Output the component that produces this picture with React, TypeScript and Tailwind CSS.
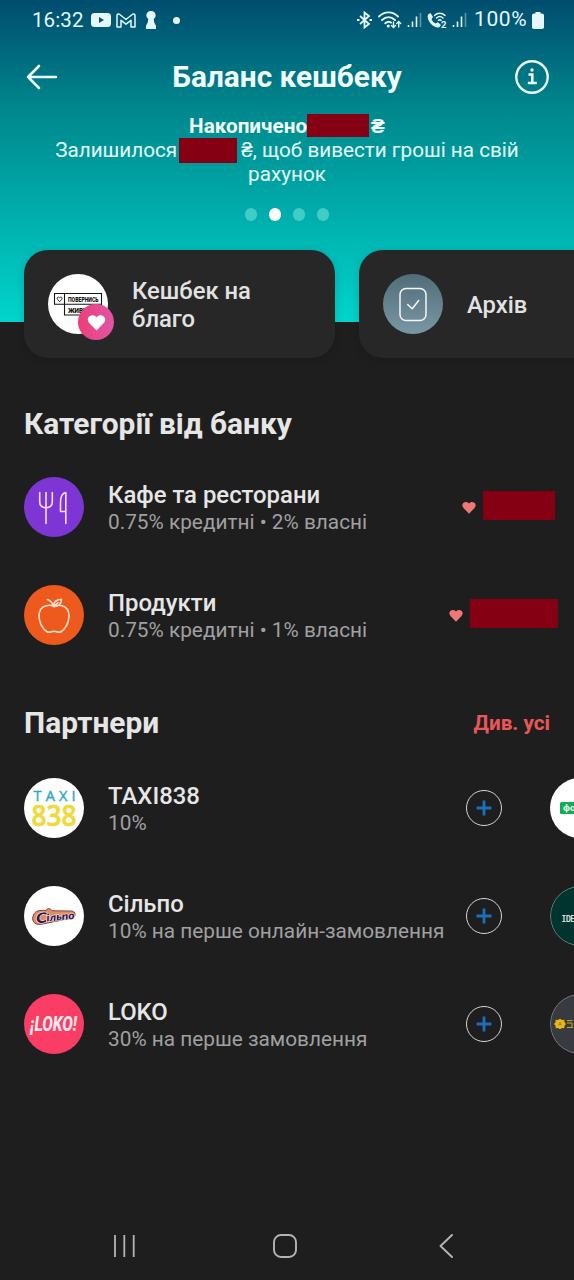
import type { ReactNode } from "react";

const CATEGORIES = [
  {
    title: "Кафе та ресторани",
    rate: "0.75% кредитні • 2% власні",
    color: "bg-[#7d35d3]",
    icon: <CutleryIcon />,
    amount: "mr-[19px] w-[72px]",
  },
  {
    title: "Продукти",
    rate: "0.75% кредитні • 1% власні",
    color: "bg-[#ee5a1e]",
    icon: <AppleIcon />,
    amount: "mr-4 w-[88px]",
  },
];

const PARTNERS = [
  { title: "TAXI838", rate: "10%", logo: <TaxiLogo />, next: <ForaLogo /> },
  { title: "Сільпо", rate: "10% на перше онлайн-замовлення", logo: <SilpoLogo />, next: <IdealistLogo /> },
  { title: "LOKO", rate: "30% на перше замовлення", logo: <LokoLogo />, next: <HiveLogo /> },
];

const HEART = "M8 14.6 1.6 8C-.4 5.8.1 2.9 2.2 1.7 4.2.5 6.8.9 8 3 9.2.9 11.8.5 13.8 1.7 15.9 2.9 16.4 5.8 14.4 8Z";

function CutleryIcon() {
  return (
    <svg viewBox="0 0 60 60" className="size-full" fill="none" stroke="#f8dcf0" strokeWidth="1.6" strokeLinecap="round" strokeLinejoin="round">
      <path d="M15.700 15.500v9.500c0 3.500 2.500 5.500 6.300 6 3.800-.5 6.300-2.500 6.300-6v-9.500M22 15.500v31M41.800 46.500v-31c-3.500.7-5.300 4.500-5.300 10v9h5.300" />
    </svg>
  );
}

function AppleIcon() {
  return (
    <svg viewBox="0 0 60 60" className="size-full" fill="none" stroke="#ffe2cc" strokeWidth="1.600" strokeLinecap="round" strokeLinejoin="round">
      <path d="M30 21.500c-2-1.300-5.200-1.600-8-.8-4.500 1.300-7 5-7 10.300 0 6.500 3.700 13.300 8 15.800 2.500 1.400 4.600-.6 7-.6s4.500 2 7 .6c4.300-2.500 8-9.300 8-15.800 0-5.300-2.500-9-7-10.300-2.800-.8-6-.5-8 .8Z" />
      <path d="M23.500 14.500c3 1.300 5.200 3.500 6.500 7M30 21.500c-1-4 2-7.200 7.500-7.300-.2 4.500-2.500 7.300-7.500 7.300Zm0 0 4-4" />
    </svg>
  );
}

function TaxiLogo() {
  return (
    <svg viewBox="0 0 60 60" className="size-full rounded-full bg-white font-['Open_Sans',sans-serif]">
      <text x="9.500" y="22.500" fontSize="14.500" fill="#29a8c7" stroke="#29a8c7" strokeWidth=".4" textLength="42" lengthAdjust="spacing">TAXI</text>
      <text x="7.500" y="47.500" fontSize="29" fontWeight="600" fill="#f2d83a" stroke="#f2d83a" strokeWidth=".7" textLength="45" lengthAdjust="spacingAndGlyphs">838</text>
    </svg>
  );
}

function SilpoLogo() {
  return (
    <svg viewBox="0 0 60 60" className="size-full rounded-full bg-white font-['Lato',sans-serif]">
      <path d="M9.500 29c1.500-4 5-5 12.500-4.500.8-2.500 5-2.500 6 .3l19 .2c5.500.2 5.500 6.300 0 7.300L17 38.300c-7 1-10-4-7.500-9.300Z" fill="#dd8f62" stroke="#8d4140" strokeWidth="1" />
      <g transform="rotate(-5 30 32)" fontWeight="900" fontStyle="italic" fill="#311351" stroke="#f7e3df" strokeWidth="1.200" paintOrder="stroke">
        <text x="12" y="35.700" fontSize="14" textLength="11" lengthAdjust="spacingAndGlyphs">С</text>
        <text x="22.500" y="34.800" fontSize="10.500" textLength="28" lengthAdjust="spacingAndGlyphs">ільпо</text>
      </g>
    </svg>
  );
}

function LokoLogo() {
  return (
    <svg viewBox="0 0 60 60" className="size-full rounded-full bg-[#fa3d64] font-['Roboto',sans-serif]">
      <text x="6" y="37" fontSize="19.500" fontWeight="800" fontStyle="italic" fill="#ffe9ee" textLength="47" lengthAdjust="spacingAndGlyphs">¡LOKO!</text>
    </svg>
  );
}

function ForaLogo() {
  return (
    <svg viewBox="0 0 60 60" className="size-full rounded-full bg-white font-['Inter',sans-serif]">
      <rect x="10" y="24" width="40" height="12" rx="1.500" fill="#11ac54" />
      <text x="13" y="32.700" fontSize="9" fontWeight="700" fill="#e8fff0">фора</text>
    </svg>
  );
}

function IdealistLogo() {
  return (
    <svg viewBox="0 0 60 60" className="size-full rounded-full bg-[#01342f] font-['DejaVu_Sans_Mono',monospace]">
      <circle cx="30" cy="30" r="29.500" fill="none" stroke="#7d9592" strokeWidth=".8" />
      <text x="11.500" y="35.500" fontSize="8" fill="#e5edec" stroke="#e5edec" strokeWidth=".2" letterSpacing="-.4">IDEALIST</text>
    </svg>
  );
}

function HiveLogo() {
  return (
    <svg viewBox="0 0 60 60" className="size-full rounded-full bg-[#373a41]">
      <circle cx="30" cy="30" r="29.500" fill="none" stroke="#85878b" strokeWidth=".8" />
      <path d="m10 24.800 2 1.200 2.300-.2.200 2.400 1.500 1.800-1.500 1.800-.2 2.400-2.300-.2-2 1.200-2-1.200-2.300.2-.2-2.400L4 30l1.500-1.800.2-2.400 2.300.2Z" fill="#e8b70c" />
      <path d="M10 28v2m0 0 1.700 1.200M10 30l-1.700 1.200" stroke="#7a6315" strokeWidth=".9" />
      <path d="M17 26.600h5.500M17 29h5v4.500M17 33.500h5.500M24.500 26.600v7M24.500 26.600h6M24.500 30h5M24.500 33.500h6" fill="none" stroke="#d3a914" strokeWidth="1" />
    </svg>
  );
}

function CharityLogo() {
  return (
    <svg viewBox="0 0 60 60" className="size-full rounded-full bg-white font-['Roboto',sans-serif]">
      <path d="M6.500 19.500h47v10.800h-47Zm10 0V41h37V30.300" fill="none" stroke="#151515" strokeWidth="1.100" />
      <path d="M11.600 27.700 9.300 25.200c-.8-1.500 1-3 2.300-1.400 1.300-1.600 3.100-.1 2.300 1.400Z" fill="none" stroke="#151515" strokeWidth=".9" />
      <text x="20" y="28" fontSize="7.500" fontWeight="900" fill="#111" textLength="30.500" lengthAdjust="spacingAndGlyphs">ПОВЕРНИСЬ</text>
      <text x="20" y="38.500" fontSize="7.500" fontWeight="900" fill="#111" textLength="25" lengthAdjust="spacingAndGlyphs">ЖИВИМ</text>
    </svg>
  );
}

function Signal() {
  return (
    <svg viewBox="0 0 15 16" className="h-4 w-[15px]" stroke="#e2f4fa" strokeWidth="1.600">
      <path d="M1.500 15v-2M5.500 15v-5.500M9.500 15V4.500" />
      <path d="M13.500 15V1" opacity=".4" />
    </svg>
  );
}

function StatusBar() {
  return (
    <div className="flex h-10 items-center justify-between pl-8 pr-[30px] text-[#e6f7fb]">
      <div className="flex items-center">
        <span className="w-[59px] text-[20.500px] tracking-[0.100px]">16:32</span>
        <svg viewBox="0 0 20 14" className="h-[14px] w-5">
          <rect width="20" height="14" rx="3.500" fill="currentColor" />
          <path d="m8 4 5 3-5 3Z" fill="#07506f" />
        </svg>
        <svg viewBox="0 0 20 15" className="ml-[5px] h-[15px] w-5" fill="none" stroke="currentColor" strokeWidth="1.500" strokeLinejoin="round">
          <path d="M1 14V2.500C1 .7 2.800.5 3.800 1.500L10 6.500l6.200-5C17.200.5 19 .7 19 2.500V14h-4V7.300L10 11.200 5 7.300V14Z" />
        </svg>
        <svg viewBox="0 0 12 18" className="ml-[9px] h-[18px] w-3" fill="currentColor">
          <path d="M6 0C8.800 0 10.700 2 10.700 4.500c0 1.500-.9 2.600-1.900 3.300.1 3.200.8 5.200 2.200 6.700V18H1v-3.500c1.400-1.500 2.100-3.500 2.200-6.700-1-.7-1.900-1.800-1.900-3.300C1.300 2 3.200 0 6 0Z" />
        </svg>
        <span className="ml-4 size-[7px] rounded-full bg-current" />
      </div>
      <div className="flex items-center">
        <svg viewBox="0 0 15 18" className="h-[18px] w-[15px]" fill="none" stroke="currentColor" strokeWidth="1.800">
          <path d="m3 5 9 8-4.500 3.500v-15L12 5l-9 8M0 9h2.500M12.500 9H15" />
        </svg>
        <svg viewBox="0 0 26 18" className="ml-[6px] h-[18px] w-[26px]" fill="none" stroke="currentColor" strokeWidth="1.900" strokeLinecap="round">
          <path d="M1 5.500C6.500 0 14.500 0 20 5.500M4 9c4-3.600 9-3.600 13 0M7.300 12.300c2-1.700 4.200-1.700 5.700-.7" />
          <circle cx="10.300" cy="15" r=".6" fill="currentColor" />
          <path d="M15.500 11v5M13.500 14.500l2 2 2-2M20.700 16v-5M18.700 12.500l2-2 2 2" strokeWidth="1.400" />
        </svg>
        <div className="ml-[3px]"><Signal /></div>
        <svg viewBox="0 0 22 18" className="ml-[5px] h-[18px] w-[22px]">
          <path d="M1 3.500 3.500 2 6 6 4.500 8c.8 2.200 2.100 3.500 4.300 4.500l2-1.200 3.200 2.600-2 2.600C6.500 17.500-1 9.500 1 3.500Z" fill="currentColor" />
          <path d="M7.500 4.500c3-3 7.500-3 10.500 0M9.500 7c2-1.800 4.500-1.800 6.500 0M11.500 9.300c.8-.6 1.800-.6 2.600 0" fill="none" stroke="currentColor" strokeWidth="1.500" strokeLinecap="round" />
          <text x="14" y="16.500" fontSize="9.500" fontWeight="700" fill="currentColor">2</text>
        </svg>
        <div className="ml-[3px]"><Signal /></div>
        <span className="ml-[7px] w-[57px] text-[21px] tracking-[0.600px]">100%</span>
        <svg viewBox="0 0 12 17" className="ml-px h-[17px] w-3" fill="currentColor">
          <path d="M3.500 0h5v1.500H10c1.200 0 2 .8 2 2V15c0 1.200-.8 2-2 2H2c-1.200 0-2-.8-2-2V3.500c0-1.200.8-2 2-2h1.500Z" />
        </svg>
      </div>
    </div>
  );
}

function Header() {
  return (
    <header className="h-[322px] bg-linear-to-b from-[#004d6e] via-[#00888d] via-[34%] to-[#00d5cc] text-white">
      <StatusBar />
      <div className="flex h-[74px] items-center justify-between px-6">
        <svg viewBox="0 0 36 36" className="size-9" fill="none" stroke="#effcfd" strokeWidth="2.600" strokeLinecap="round" strokeLinejoin="round">
          <path d="M32 18H4M15 7 4 18l11 11" />
        </svg>
        <h1 className="text-[29.800px] font-bold text-[#f1fdff]">Баланс кешбеку</h1>
        <svg viewBox="0 0 36 36" className="size-9" fill="none" stroke="#effcfd" strokeWidth="2.400">
          <circle cx="18" cy="18" r="15.700" />
          <path d="M14.500 15.500h3.800v8.500M13.800 24h9" strokeWidth="2.500" />
          <circle cx="18" cy="11" r="1.700" fill="#effcfd" stroke="none" />
        </svg>
      </div>
      <div className="flex flex-col items-center text-[20.700px] leading-6 text-[#e5fbf9]">
        <p className="flex h-6 items-center font-bold text-[#f1fffd]">
          Накопичено
          <span className="mb-px mr-0.5 h-[23px] w-[62px] bg-[#860014]" />₴
        </p>
        <p className="flex h-6 items-center whitespace-pre">
          Залишилося
          <span className="ml-0.5 mr-1 h-[25px] w-[58px] bg-[#860014]" />₴, щоб вивести гроші на свій
        </p>
        <p>рахунок</p>
      </div>
      <div className="mt-[22px] flex justify-center gap-3">
        <span className="h-[13px] w-3 rounded-full bg-[#41ccc6]" />
        <span className="h-[13px] w-3 rounded-full bg-white" />
        <span className="h-[13px] w-3 rounded-full bg-[#41ccc6]" />
        <span className="h-[13px] w-3 rounded-full bg-[#41ccc6]" />
      </div>
    </header>
  );
}

function ActionCard({ icon, children }: { icon: ReactNode; children: ReactNode }) {
  return (
    <div className="flex h-[108px] w-[311px] shrink-0 items-center gap-6 rounded-3xl bg-[#272727] pl-6 shadow-[0_2px_10px_rgba(0,0,0,0.15)]">
      {icon}
      <span className="mt-0.5 w-[140px] text-[23.800px] font-medium leading-7 text-[#e2e2e2]">{children}</span>
    </div>
  );
}

function Row({ icon, title, rate, children }: { icon: ReactNode; title: string; rate: string; children: ReactNode }) {
  return (
    <li className="flex h-[108px] items-center">
      <div className="ml-6 size-[60px] shrink-0">{icon}</div>
      <div className="ml-6 mt-0.5 w-[338px] shrink-0 whitespace-nowrap">
        <p className="text-[23.900px] font-medium leading-7 text-[#e6e6e6]">{title}</p>
        <p className="text-[20.800px] leading-[26px] text-[#a0a0a0]">{rate}</p>
      </div>
      {children}
    </li>
  );
}

export default function App() {
  return (
    <div className="flex h-[1280px] w-[574px] flex-col overflow-hidden bg-[#1e1e1e] font-['Roboto',sans-serif]">
      <Header />

      <div className="-mt-[72px] flex gap-6 pl-6">
        <ActionCard
          icon={
            <div className="relative size-[60px] shrink-0">
              <CharityLogo />
              <span className="absolute left-[30px] top-[30px] flex size-9 items-center justify-center rounded-full bg-linear-to-r from-[#ed3c79] to-[#df55a5]">
                <svg viewBox="0 0 16 15" className="h-[17px] w-[19px]" fill="#fff">
                  <path d={HEART} />
                </svg>
              </span>
            </div>
          }
        >
          Кешбек на благо
        </ActionCard>
        <ActionCard
          icon={
            <div className="size-[60px] shrink-0 rounded-full bg-linear-to-b from-[#526d7a] to-[#7b97a4]">
              <svg viewBox="0 0 60 60" fill="none" stroke="#f2f8fa" strokeWidth="1.500" strokeLinecap="round" strokeLinejoin="round">
                <rect x="17" y="14.500" width="26" height="32" rx="6" />
                <path d="m24.700 30.500 4.500 4.300 6.500-8.300" />
              </svg>
            </div>
          }
        >
          Архів
        </ActionCard>
      </div>

      <h2 className="mt-[46px] pl-6 text-[29.900px] font-bold leading-10 text-[#e6e6e6]">Категорії від банку</h2>
      <ul className="mt-[9px]">
        {CATEGORIES.map((c) => (
          <Row key={c.title} title={c.title} rate={c.rate} icon={<div className={`size-full rounded-full ${c.color}`}>{c.icon}</div>}>
            <div className="flex flex-1 items-center justify-end">
              <svg viewBox="0 0 16 15" className="mr-[7px] h-[13px] w-[14px] shrink-0" fill="#f07778">
                <path d={HEART} />
              </svg>
              <span className={`mb-[3px] h-[29px] shrink-0 bg-[#860014] ${c.amount}`} />
            </div>
          </Row>
        ))}
      </ul>

      <div className="mt-[34px] flex items-center justify-between px-6">
        <h2 className="text-[29.900px] font-bold leading-10 text-[#e6e6e6]">Партнери</h2>
        <a className="pt-0.5 text-[20.700px] font-bold text-[#ea5759]">Див. усі</a>
      </div>
      <ul className="mt-[11px]">
        {PARTNERS.map((p) => (
          <Row key={p.title} title={p.title} rate={p.rate} icon={p.logo}>
            <button className="ml-5 size-9 shrink-0 rounded-full border border-[#d5d5d5]">
              <svg viewBox="0 0 34 34" stroke="#1b6fbd" strokeWidth="2.800">
                <path d="M17 9.500v15M9.500 17h15" />
              </svg>
            </button>
            <div className="ml-12 size-[60px] shrink-0">{p.next}</div>
          </Row>
        ))}
      </ul>

      <nav className="mt-auto flex h-[68px] items-center pl-[112px]">
        <svg viewBox="0 0 24 24" className="size-6" stroke="#b4b4b4" strokeWidth="1.800">
          <path d="M3 1v22M12.300 1v22M21.700 1v22" />
        </svg>
        <svg viewBox="0 0 24 24" className="ml-[137px] size-6" fill="none" stroke="#b4b4b4" strokeWidth="1.900">
          <rect x="1" y="1" width="22" height="22" rx="7" />
        </svg>
        <svg viewBox="0 0 14 24" className="ml-[142px] h-6 w-[14px]" fill="none" stroke="#b4b4b4" strokeWidth="1.900" strokeLinecap="round" strokeLinejoin="round">
          <path d="M13 1 1.500 12 13 23" />
        </svg>
      </nav>
    </div>
  );
}
